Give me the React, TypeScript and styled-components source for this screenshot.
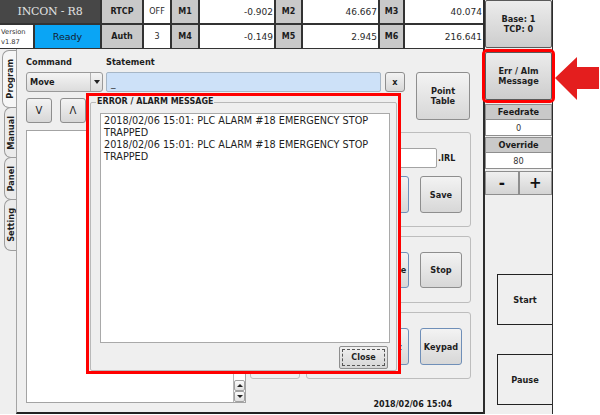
import React from 'react';
import styled, { createGlobalStyle } from 'styled-components';

const GlobalStyle = createGlobalStyle`
  html, body {
    margin: 0;
    padding: 0;
    background: #ffffff;
  }
  body {
    font-family: 'DejaVu Sans', 'Noto Sans', sans-serif;
    color: #1a1a1a;
  }
  * {
    box-sizing: border-box;
  }
`;

const Screen = styled.div`
  position: relative;
  display: flex;
  width: 553px;
  height: 414px;
`;

const MainSide = styled.div`
  width: 483px;
  display: flex;
  flex-direction: column;
`;

/* ---------- header ---------- */

const Header = styled.div`
  display: grid;
  grid-template-columns: 100px 40px 26px 26px 74px 25px 75px 23px 78px;
  grid-template-rows: 23px 23px;
  gap: 2px;
  height: 49px;
  padding-bottom: 1px;
  background: #333333;
`;

const TitleCell = styled.div`
  display: flex;
  align-items: center;
  justify-content: center;
  background: #474747;
  color: #e2e2e2;
  font-family: 'DejaVu Serif', 'Liberation Serif', serif;
  font-size: 11px;
  letter-spacing: -0.2px;
`;

const LabelCell = styled.div`
  display: flex;
  align-items: center;
  justify-content: center;
  background: #c9c9c9;
  font-size: 8px;
  font-weight: bold;
  color: #1c1c1c;
`;

const ValueCell = styled.div<{ $align?: 'center' | 'right' }>`
  display: flex;
  align-items: center;
  justify-content: ${(p) => (p.$align === 'center' ? 'center' : 'flex-end')};
  padding-right: ${(p) => (p.$align === 'center' ? '0' : '1px')};
  background: #ffffff;
  font-size: ${(p) => (p.$align === 'center' ? '8px' : '9px')};
  color: #2a2a2a;
`;

const StatusCell = styled.div`
  display: flex;
  gap: 2px;
`;

const VersionBox = styled.div`
  width: 33px;
  display: flex;
  flex-direction: column;
  justify-content: center;
  padding-left: 1px;
  background: #ffffff;
  font-size: 6.7px;
  line-height: 10px;
  color: #333;
`;

const ReadyBox = styled.div`
  flex: 1;
  display: flex;
  align-items: center;
  justify-content: center;
  background: #0aa5f5;
  font-size: 9.5px;
  color: #141c30;
`;

/* ---------- body ---------- */

const Body = styled.div`
  flex: 1;
  display: flex;
  background: #efefef;
`;

const TabStrip = styled.div`
  width: 16px;
  display: flex;
  flex-direction: column;
  padding-top: 1px;
`;

const Tab = styled.div<{ $h: number; $active?: boolean }>`
  height: ${(p) => p.$h}px;
  margin-left: ${(p) => (p.$active ? 2 : 4)}px;
  display: flex;
  align-items: center;
  justify-content: center;
  border: 1px solid #9c9c9c;
  border-right: none;
  border-radius: 7px 0 0 7px;
  background: ${(p) => (p.$active ? '#f6f6f6' : '#ebebeb')};
  margin-bottom: -1px;
`;

const TabLabel = styled.span`
  writing-mode: vertical-rl;
  transform: rotate(180deg);
  font-size: 8.2px;
  font-weight: bold;
  color: #1e1e1e;
`;

const Panel = styled.div`
  flex: 1;
  display: flex;
  flex-direction: column;
  padding: 0 12px 0 9px;
  border-left: 1px solid #a4a4a4;
  border-bottom: 2px solid #222;
`;

const TopArea = styled.div`
  display: flex;
  align-items: flex-start;
`;

const TopControls = styled.div`
  display: flex;
  flex-direction: column;
`;

const LabelRow = styled.div`
  display: flex;
  height: 12px;
  margin-top: 7px;
  align-items: center;
`;

const FieldLabel = styled.span<{ $w?: number }>`
  width: ${(p) => (p.$w ? `${p.$w}px` : 'auto')};
  font-size: 8.2px;
  font-weight: bold;
  color: #1e1e1e;
`;

const InputRow = styled.div`
  display: flex;
  align-items: center;
  margin-top: 4px;
  height: 20px;
`;

const Combo = styled.div`
  width: 77px;
  height: 20px;
  display: flex;
  border: 1px solid #9a9a9a;
  border-radius: 3px;
  background: linear-gradient(#f4f4f4, #dcdcdc);
`;

const ComboText = styled.span`
  flex: 1;
  display: flex;
  align-items: center;
  padding-left: 3px;
  font-size: 8.2px;
  font-weight: bold;
`;

const ComboArrow = styled.span`
  width: 12px;
  display: flex;
  align-items: center;
  justify-content: center;
  border-left: 1px solid #b0b0b0;
`;

const StatementInput = styled.div`
  width: 275px;
  height: 20px;
  margin-left: 3px;
  padding: 0 4px;
  display: flex;
  align-items: flex-end;
  border: 1px solid #a6b6c6;
  border-radius: 2px;
  background: #cde1f8;
  font-size: 9px;
  line-height: 14px;
`;

const Button = styled.button<{ $w: number; $h: number; $focus?: boolean; $size?: number; $weight?: string }>`
  width: ${(p) => p.$w}px;
  height: ${(p) => p.$h}px;
  flex-shrink: 0;
  padding: 0;
  border: 1px solid ${(p) => (p.$focus ? '#6f8fb8' : '#8e8e8e')};
  border-radius: 3px;
  background: linear-gradient(#f3f3f3, #d7d7d7);
  font-family: 'DejaVu Sans', sans-serif;
  font-size: ${(p) => p.$size ?? 8.2}px;
  font-weight: ${(p) => p.$weight ?? 'bold'};
  line-height: 10px;
  color: #1e1e1e;
`;

const ArrowRow = styled.div`
  display: flex;
  gap: 8px;
  margin-top: 6px;
`;

const LowerArea = styled.div`
  flex: 1;
  display: flex;
  margin-top: 7px;
`;

const ListBox = styled.div`
  width: 220px;
  margin-bottom: 9px;
  display: flex;
  justify-content: flex-end;
  background: #ffffff;
  border: 1px solid #a3a3a3;
`;

const ScrollTrack = styled.div`
  width: 12px;
  display: flex;
  flex-direction: column;
  justify-content: flex-end;
  border-left: 1px solid #b6b6b6;
`;

const ScrollButton = styled.div`
  height: 11px;
  display: flex;
  align-items: center;
  justify-content: center;
  border: 1px solid #a2a2a2;
  border-radius: 2px;
  background: linear-gradient(#fbfbfb, #e0e0e0);
`;

const Tri = styled.span<{ $up?: boolean }>`
  width: 0;
  height: 0;
  border-left: 3px solid transparent;
  border-right: 3px solid transparent;
  ${(p) => (p.$up ? 'border-bottom: 3px solid #222;' : 'border-top: 3px solid #222;')}
`;

const GroupBox = styled.div<{ $h: number }>`
  height: ${(p) => p.$h}px;
  border: 1px solid #bdbdbd;
  border-radius: 3px;
`;

const MiddleBox = styled(GroupBox)`
  width: 50px;
  margin: 2px 0 0 4px;
`;

const RightStack = styled.div`
  width: 165px;
  margin-left: 6px;
  display: flex;
  flex-direction: column;
  gap: 9px;
  padding-top: 2px;
`;

const ActionGroup = styled(GroupBox)<{ $top: number }>`
  display: flex;
  flex-direction: column;
  padding: ${(p) => p.$top}px 8px 0 8px;
`;

const FileRow = styled.div`
  display: flex;
  align-items: center;
  gap: 1px;
`;

const FileInput = styled.div`
  width: 122px;
  height: 20px;
  border: 1px solid #a3a3a3;
  border-radius: 2px;
  background: #fff;
`;

const FileExt = styled.span`
  font-size: 8px;
  font-weight: bold;
`;

const ButtonRow = styled.div<{ $mt?: number }>`
  display: flex;
  justify-content: flex-end;
  gap: 11px;
  margin-top: ${(p) => p.$mt ?? 0}px;
`;

const DateText = styled.div`
  margin-top: auto;
  height: 12px;
  margin-bottom: 1px;
  padding-right: 19px;
  text-align: right;
  font-size: 8px;
  font-weight: bold;
  line-height: 12px;
  color: #1a1a1a;
`;

/* ---------- right column ---------- */

const SideColumn = styled.div`
  width: 70px;
  display: flex;
  flex-direction: column;
  background: #efefef;
  border-left: 2px solid #2d2d2d;
  border-right: 1px solid #2d2d2d;
`;

const SideButton = styled.button<{ $h: number; $mark?: boolean }>`
  height: ${(p) => p.$h}px;
  padding: 0;
  border: 1px solid #5a5a5a;
  border-radius: 2px;
  background: linear-gradient(#ececec, #cdcdcd);
  font-family: 'DejaVu Sans', sans-serif;
  font-size: 8.2px;
  font-weight: bold;
  line-height: 10px;
  color: #1e1e1e;
  outline: ${(p) => (p.$mark ? '3px solid #ff0000' : 'none')};
  outline-offset: 0;
`;

const InfoLabel = styled.div<{ $mt: number }>`
  height: 16px;
  margin-top: ${(p) => p.$mt}px;
  display: flex;
  align-items: center;
  justify-content: center;
  background: #c9c9c9;
  border: 1px solid #8e8e8e;
  font-size: 8.2px;
  font-weight: bold;
`;

const InfoValue = styled.div`
  height: 16px;
  display: flex;
  align-items: center;
  justify-content: center;
  background: #ffffff;
  border: 1px solid #8e8e8e;
  border-top: none;
  font-size: 8.2px;
  color: #333;
`;

const StepRow = styled.div`
  display: flex;
  height: 24px;
  margin-top: 2px;
`;

const StepButton = styled.button`
  flex: 1;
  padding: 0;
  border: 1px solid #8e8e8e;
  background: linear-gradient(#f0f0f0, #d4d4d4);
  font-family: 'DejaVu Sans', sans-serif;
  font-size: 15px;
  font-weight: bold;
  line-height: 15px;
  color: #111;
`;

const RunButton = styled.button<{ $mt: number }>`
  height: 51px;
  margin: ${(p) => p.$mt}px 0 0 12px;
  padding: 0;
  border: 1.5px solid #222;
  border-right: none;
  background: #efefef;
  font-family: 'DejaVu Sans', sans-serif;
  font-size: 8.2px;
  font-weight: bold;
  color: #1e1e1e;
`;

/* ---------- alarm dialog ---------- */

const Dialog = styled.div`
  position: absolute;
  left: 86px;
  top: 93px;
  width: 315px;
  height: 281px;
  display: flex;
  padding: 1px 1px 0 1px;
  border: 3px solid #ff0000;
  background: #efefef;
`;

const MessageGroup = styled.fieldset`
  flex: 1;
  min-width: 0;
  margin: 0;
  display: flex;
  flex-direction: column;
  padding: 6px 6px 1px 9px;
  border: 1px solid #b9b9b9;
  border-radius: 2px;
`;

const Legend = styled.legend`
  margin-left: -4px;
  padding: 0 1px;
  font-size: 8px;
  font-weight: bold;
  line-height: 10px;
  color: #1e1e1e;
`;

const MessageArea = styled.div`
  flex: 1;
  padding: 1px 3px;
  background: #ffffff;
  border: 1px solid #a9a9a9;
  font-size: 9.7px;
  line-height: 12px;
  color: #1e1e1e;
`;

const CloseButton = styled.button`
  align-self: flex-end;
  width: 49px;
  height: 23px;
  margin: 3px 2px 0 0;
  padding: 2px;
  border: 1px solid #8e8e8e;
  border-radius: 2px;
  background: linear-gradient(#f0f0f0, #d6d6d6);
  font-family: 'DejaVu Sans', sans-serif;
  font-size: 8px;
  font-weight: bold;
  color: #1e1e1e;
`;

const FocusRing = styled.span`
  display: flex;
  height: 100%;
  align-items: center;
  justify-content: center;
  border: 1px dashed #555;
`;

const Pointer = styled.svg`
  position: absolute;
  left: 555px;
  top: 57px;
`;

const messages = [
  '2018/02/06 15:01: PLC ALARM #18 EMERGENCY STOP TRAPPED',
  '2018/02/06 15:01: PLC ALARM #18 EMERGENCY STOP TRAPPED',
];

const App: React.FC = () => {
  return (
    <Screen>
      <GlobalStyle />
      <MainSide>
        <Header>
          <TitleCell>INCON - R8</TitleCell>
          <LabelCell>RTCP</LabelCell>
          <ValueCell $align="center">OFF</ValueCell>
          <LabelCell>M1</LabelCell>
          <ValueCell>-0.902</ValueCell>
          <LabelCell>M2</LabelCell>
          <ValueCell>46.667</ValueCell>
          <LabelCell>M3</LabelCell>
          <ValueCell>40.074</ValueCell>

          <StatusCell>
            <VersionBox>
              <span>Version</span>
              <span>v1.87</span>
            </VersionBox>
            <ReadyBox>Ready</ReadyBox>
          </StatusCell>
          <LabelCell>Auth</LabelCell>
          <ValueCell $align="center">3</ValueCell>
          <LabelCell>M4</LabelCell>
          <ValueCell>-0.149</ValueCell>
          <LabelCell>M5</LabelCell>
          <ValueCell>2.945</ValueCell>
          <LabelCell>M6</LabelCell>
          <ValueCell>216.641</ValueCell>
        </Header>

        <Body>
          <TabStrip>
            <Tab $h={58} $active>
              <TabLabel>Program</TabLabel>
            </Tab>
            <Tab $h={51}>
              <TabLabel>Manual</TabLabel>
            </Tab>
            <Tab $h={43}>
              <TabLabel>Panel</TabLabel>
            </Tab>
            <Tab $h={52}>
              <TabLabel>Setting</TabLabel>
            </Tab>
          </TabStrip>

          <Panel>
            <TopArea>
              <TopControls>
                <LabelRow>
                  <FieldLabel $w={80}>Command</FieldLabel>
                  <FieldLabel>Statement</FieldLabel>
                </LabelRow>
                <InputRow>
                  <Combo>
                    <ComboText>Move</ComboText>
                    <ComboArrow>
                      <svg width="6" height="4" viewBox="0 0 6 4">
                        <path d="M0 0 L6 0 L3 4 Z" fill="#222" />
                      </svg>
                    </ComboArrow>
                  </Combo>
                  <StatementInput>_</StatementInput>
                  <Button $w={20} $h={20} style={{ marginLeft: 4 }}>
                    x
                  </Button>
                </InputRow>
                <ArrowRow>
                  <Button $w={26} $h={25} $size={10} $weight="normal">
                    V
                  </Button>
                  <Button $w={26} $h={25} $size={10} $weight="normal">
                    Λ
                  </Button>
                </ArrowRow>
              </TopControls>
              <Button $w={54} $h={48} style={{ marginLeft: 11, marginTop: 23 }}>
                Point
                <br />
                Table
              </Button>
            </TopArea>

            <LowerArea>
              <ListBox>
                <ScrollTrack>
                  <ScrollButton>
                    <Tri $up />
                  </ScrollButton>
                  <ScrollButton>
                    <Tri />
                  </ScrollButton>
                </ScrollTrack>
              </ListBox>
              <MiddleBox $h={247} />
              <RightStack>
                <ActionGroup $h={95} $top={15}>
                  <FileRow>
                    <FileInput />
                    <FileExt>.IRL</FileExt>
                  </FileRow>
                  <ButtonRow $mt={8}>
                    <Button $w={42} $h={37}>Open</Button>
                    <Button $w={42} $h={37} $focus>Load</Button>
                    <Button $w={42} $h={37}>Save</Button>
                  </ButtonRow>
                </ActionGroup>
                <ActionGroup $h={67} $top={15}>
                  <ButtonRow>
                    <Button $w={42} $h={36}>Run</Button>
                    <Button $w={42} $h={36} $focus>Resume</Button>
                    <Button $w={42} $h={36}>Stop</Button>
                  </ButtonRow>
                </ActionGroup>
                <ActionGroup $h={67} $top={15}>
                  <ButtonRow>
                    <Button $w={42} $h={37}>Delete</Button>
                    <Button $w={42} $h={37} $focus>Insert</Button>
                    <Button $w={42} $h={37} $focus>Keypad</Button>
                  </ButtonRow>
                </ActionGroup>
                <DateText>2018/02/06 15:04</DateText>
              </RightStack>
            </LowerArea>
          </Panel>
        </Body>
      </MainSide>

      <SideColumn>
        <SideButton $h={48}>
          Base: 1
          <br />
          TCP: 0
        </SideButton>
        <SideButton $h={48} $mark style={{ marginTop: 4 }}>
          Err / Alm
          <br />
          Message
        </SideButton>
        <InfoLabel $mt={4}>Feedrate</InfoLabel>
        <InfoValue>0</InfoValue>
        <InfoLabel $mt={1}>Override</InfoLabel>
        <InfoValue>80</InfoValue>
        <StepRow>
          <StepButton>-</StepButton>
          <StepButton>+</StepButton>
        </StepRow>
        <RunButton $mt={79}>Start</RunButton>
        <RunButton $mt={29}>Pause</RunButton>
      </SideColumn>

      <Dialog>
        <MessageGroup>
          <Legend>ERROR / ALARM MESSAGE</Legend>
          <MessageArea>
            {messages.map((m, i) => (
              <div key={i}>{m}</div>
            ))}
          </MessageArea>
          <CloseButton>
            <FocusRing>Close</FocusRing>
          </CloseButton>
        </MessageGroup>
      </Dialog>

      <Pointer width="45" height="44" viewBox="0 0 45 44">
        <polygon points="0,21 22,0 22,10 44,10 44,32 22,32 22,43" fill="#e41e1e" />
      </Pointer>
    </Screen>
  );
};

export default App;
